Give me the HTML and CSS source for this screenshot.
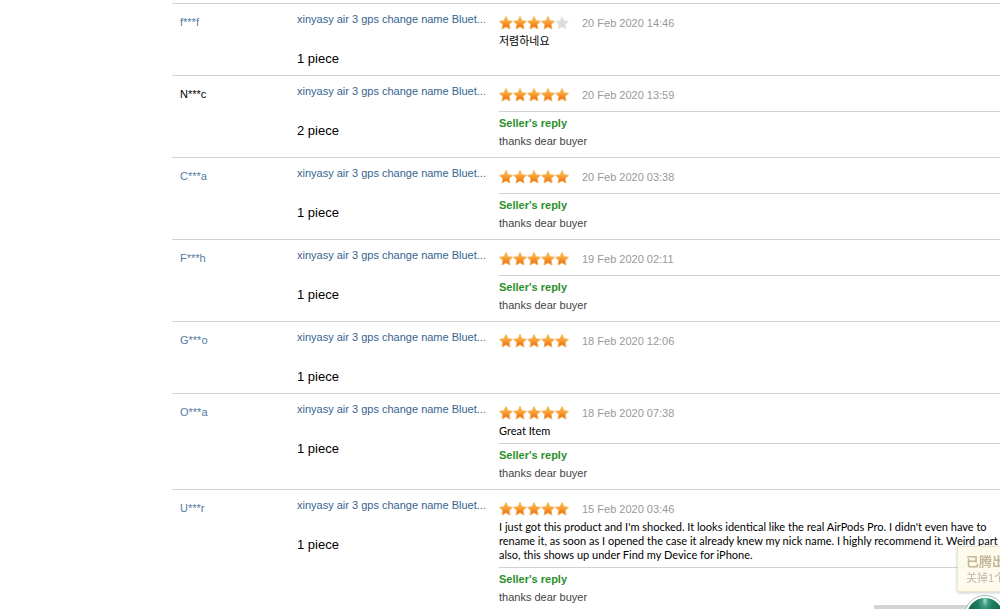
FILE: index.html
```
<!DOCTYPE html>
<html lang="en">
  <head>
    <meta charset="UTF-8" />
    <meta name="viewport" content="width=device-width, initial-scale=1.0" />
    <title>Feedback</title>
    <link rel="stylesheet" href="styles.css">
  </head>
  <body>
    <!-- Star shape shared by all ratings -->
    <svg class="sprite" aria-hidden="true">
      <defs>
        <linearGradient id="gold" x1="0" y1="0" x2="0" y2="1">
          <stop offset="0" stop-color="#f9c440" />
          <stop offset="0.45" stop-color="#fba032" />
          <stop offset="1" stop-color="#e8600f" />
        </linearGradient>
        <symbol id="star" viewBox="0 0 14 14">
          <path d="M7 .6 8.9 4.8 13.4 5.3 10.1 8.4 11 13 7 10.8 3 13 3.9 8.4 .6 5.3 5.1 4.8Z" stroke-width="1" stroke-linejoin="round" />
        </symbol>
      </defs>
    </svg>

    <ul class="feedback-list" id="feedbackList"></ul>

    <aside class="memory-tip">
      <strong>已腾出</strong>
      <span>关掉1个</span>
    </aside>
    <div class="bottom-bar"></div>
    <div class="memory-ball"></div>

    <script src="script.js"></script>
  </body>
</html>
```
FILE: styles.css
```
* {
  margin: 0;
  padding: 0;
  box-sizing: border-box;
}

body {
  font-family: "Liberation Sans", Arial, sans-serif;
  font-size: 11px;
  line-height: 14px;
  color: #000;
  background-color: #fff;
  overflow-x: hidden;
}

a {
  color: #36648f;
  text-decoration: none;
}

a:hover {
  text-decoration: underline;
}

.sprite {
  position: absolute;
  width: 0;
  height: 0;
}

.feedback-list {
  list-style: none;
  padding-top: 3px;
  margin-left: 172px;
}

.feedback-item {
  display: grid;
  grid-template-columns: 117px 202px 1fr;
  min-height: 72px;
  padding-left: 8px;
  border-top: 1px solid #d2d2d2;
}

.buyer {
  padding-top: 11px;
}

.buyer a {
  color: #5579a0;
}

.product {
  padding-top: 8px;
  white-space: nowrap;
}

.quantity {
  margin-top: 24px;
  font-size: 13px;
  line-height: 18px;
}

.feedback {
  display: flex;
  flex-direction: column;
  padding: 11px 0 7px;
}

.rating {
  display: flex;
  align-items: center;
  gap: 13px;
  height: 16px;
  margin-bottom: 3px;
}

.stars {
  display: flex;
}

.star {
  width: 14px;
  height: 14px;
  fill: url(#gold);
  stroke: #f3b258;
}

.star.empty {
  fill: #dcdcdc;
  stroke: #e6e6e6;
}

.rating time {
  color: #999;
}

.comment {
  font-family: Lato, "Noto Sans CJK KR", sans-serif;
}

.reply {
  margin-top: 5px;
  padding-top: 2px;
  border-top: 1px solid #d2d2d2;
  line-height: 18px;
  color: #444;
}

.reply h3 {
  font-size: 11px;
  color: #2b8f2b;
}

.memory-tip {
  position: fixed;
  right: -60px;
  bottom: 17px;
  width: 103px;
  height: 46px;
  padding: 6px 8px;
  background-color: rgba(255, 251, 234, 0.9);
  border: 1px solid #ede5cc;
  box-shadow: 0 1px 3px rgba(0, 0, 0, 0.2);
  font-family: "Liberation Sans", "Noto Sans CJK SC", sans-serif;
  line-height: 17px;
  white-space: nowrap;
  color: #bdb8a8;
}

.memory-tip strong {
  display: block;
  font-size: 13px;
  color: #c4b899;
}

.bottom-bar {
  position: fixed;
  right: 0;
  bottom: 0;
  width: 126px;
  height: 4px;
  background-color: #d4d4d4;
}

.memory-ball {
  position: fixed;
  right: -5px;
  bottom: -27px;
  width: 40px;
  height: 40px;
  border: 2px solid #fff;
  border-radius: 50%;
  outline: 1px solid #9dbfb0;
  background: radial-gradient(ellipse at 50% 8%, #a5dcc6 0, #3f9b80 12%, #1d7c60 30%, #14694f 60%);
}
```
FILE: script.js
```
const product = "xinyasy air 3 gps change name Bluet...";

const feedback = [
  { buyer: "f***f", pieces: 1, stars: 4, date: "20 Feb 2020 14:46", comment: "저렴하네요" },
  { buyer: "N***c", anonymous: true, pieces: 2, stars: 5, date: "20 Feb 2020 13:59", reply: "thanks dear buyer" },
  { buyer: "C***a", pieces: 1, stars: 5, date: "20 Feb 2020 03:38", reply: "thanks dear buyer" },
  { buyer: "F***h", pieces: 1, stars: 5, date: "19 Feb 2020 02:11", reply: "thanks dear buyer" },
  { buyer: "G***o", pieces: 1, stars: 5, date: "18 Feb 2020 12:06" },
  { buyer: "O***a", pieces: 1, stars: 5, date: "18 Feb 2020 07:38", comment: "Great Item", reply: "thanks dear buyer" },
  {
    buyer: "U***r",
    pieces: 1,
    stars: 5,
    date: "15 Feb 2020 03:46",
    comment: "I just got this product and I'm shocked. It looks identical like the real AirPods Pro. I didn't even have to rename it, as soon as I opened the case it already knew my nick name. I highly recommend it. Weird part also, this shows up under Find my Device for iPhone.",
    reply: "thanks dear buyer",
  },
];

// Five stars, the ones above the rating are greyed out
function renderStars(count) {
  let html = "";
  for (let i = 0; i < 5; i++) {
    html += `<svg class="star${i < count ? "" : " empty"}"><use href="#star" /></svg>`;
  }
  return html;
}

function renderItem(item) {
  return `
    <li class="feedback-item">
      <div class="buyer">${item.anonymous ? item.buyer : `<a href="#">${item.buyer}</a>`}</div>
      <div class="product">
        <a href="#">${product}</a>
        <p class="quantity">${item.pieces} piece</p>
      </div>
      <div class="feedback">
        <div class="rating">
          <div class="stars" role="img" aria-label="${item.stars} out of 5">${renderStars(item.stars)}</div>
          <time>${item.date}</time>
        </div>
        ${item.comment ? `<p class="comment">${item.comment}</p>` : ""}
        ${item.reply ? `<div class="reply"><h3>Seller's reply</h3><p>${item.reply}</p></div>` : ""}
      </div>
    </li>`;
}

document.getElementById("feedbackList").innerHTML = feedback.map(renderItem).join("");
```
